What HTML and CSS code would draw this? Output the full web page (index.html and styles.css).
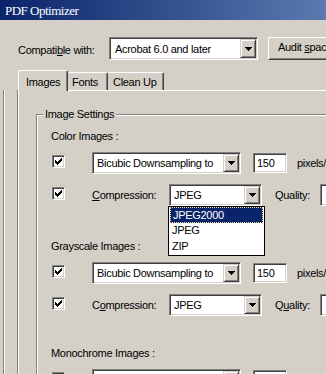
FILE: index.html
```html
<!DOCTYPE html>
<html lang="en">
<head>
    <meta charset="UTF-8">
    <meta name="viewport" content="width=device-width, initial-scale=1.0">
    <title>PDF Optimizer</title>
    <link rel="stylesheet" href="styles.css">
</head>
<body>
    <div class="titlebar">PDF Optimizer</div>

    <div class="compat">
        <span class="lbl">Compati<u>b</u>le with:</span>
        <div class="combo combo-version">
            <span class="combo-text">Acrobat 6.0 and later</span>
            <span class="combo-btn"><svg width="7" height="4" viewBox="0 0 7 4"><rect x="0" y="0" width="7" height="1"/><rect x="1" y="1" width="5" height="1"/><rect x="2" y="2" width="3" height="1"/><rect x="3" y="3" width="1" height="1"/></svg></span>
        </div>
        <div class="btn">Audit <u>s</u>pace usage...</div>
    </div>

    <div class="tabs">
        <div class="tab tab-active">Images</div>
        <div class="tab tab-fonts">Fonts</div>
        <div class="tab tab-clean">Clean Up</div>
    </div>

    <div class="sheet">
        <div class="panel">
            <div class="group">
                <div class="group-title">Image Settings</div>

                <!-- color -->
                <div class="section-label first">Color Images :</div>
                <div class="row">
                    <span class="check"><svg width="7" height="7" viewBox="0 0 7 7"><path d="M6 0h1v3H6v1H5v1H4v1H3v1H2V6H1V5H0V2h1v1h1v1h1V3h1V2h1V1h1z"/></svg></span>
                    <div class="combo combo-sampling">
                        <span class="combo-text">Bicubic Downsampling to</span>
                        <span class="combo-btn"><svg width="7" height="4" viewBox="0 0 7 4"><rect x="0" y="0" width="7" height="1"/><rect x="1" y="1" width="5" height="1"/><rect x="2" y="2" width="3" height="1"/><rect x="3" y="3" width="1" height="1"/></svg></span>
                    </div>
                    <span class="field">150</span>
                    <span class="unit">pixels/inch for images above</span>
                </div>
                <div class="row row-compress">
                    <span class="check"><svg width="7" height="7" viewBox="0 0 7 7"><path d="M6 0h1v3H6v1H5v1H4v1H3v1H2V6H1V5H0V2h1v1h1v1h1V3h1V2h1V1h1z"/></svg></span>
                    <span class="compress-lbl"><u>C</u>ompression:</span>
                    <div class="combo combo-compress">
                        <span class="combo-text">JPEG</span>
                        <span class="combo-btn"><svg width="7" height="4" viewBox="0 0 7 4"><rect x="0" y="0" width="7" height="1"/><rect x="1" y="1" width="5" height="1"/><rect x="2" y="2" width="3" height="1"/><rect x="3" y="3" width="1" height="1"/></svg></span>
                        <ul class="droplist">
                            <li class="picked">JPEG2000</li>
                            <li>JPEG</li>
                            <li>ZIP</li>
                        </ul>
                    </div>
                    <span class="quality-lbl">Quality:</span>
                    <div class="combo combo-quality"></div>
                </div>

                <!-- grayscale -->
                <div class="section-label">Grayscale Images :</div>
                <div class="row">
                    <span class="check"><svg width="7" height="7" viewBox="0 0 7 7"><path d="M6 0h1v3H6v1H5v1H4v1H3v1H2V6H1V5H0V2h1v1h1v1h1V3h1V2h1V1h1z"/></svg></span>
                    <div class="combo combo-sampling">
                        <span class="combo-text">Bicubic Downsampling to</span>
                        <span class="combo-btn"><svg width="7" height="4" viewBox="0 0 7 4"><rect x="0" y="0" width="7" height="1"/><rect x="1" y="1" width="5" height="1"/><rect x="2" y="2" width="3" height="1"/><rect x="3" y="3" width="1" height="1"/></svg></span>
                    </div>
                    <span class="field">150</span>
                    <span class="unit">pixels/inch for images above</span>
                </div>
                <div class="row row-compress">
                    <span class="check"><svg width="7" height="7" viewBox="0 0 7 7"><path d="M6 0h1v3H6v1H5v1H4v1H3v1H2V6H1V5H0V2h1v1h1v1h1V3h1V2h1V1h1z"/></svg></span>
                    <span class="compress-lbl">C<u>o</u>mpression:</span>
                    <div class="combo combo-compress">
                        <span class="combo-text">JPEG</span>
                        <span class="combo-btn"><svg width="7" height="4" viewBox="0 0 7 4"><rect x="0" y="0" width="7" height="1"/><rect x="1" y="1" width="5" height="1"/><rect x="2" y="2" width="3" height="1"/><rect x="3" y="3" width="1" height="1"/></svg></span>
                    </div>
                    <span class="quality-lbl">Q<u>u</u>ality:</span>
                    <div class="combo combo-quality"></div>
                </div>

                <!-- monochrome -->
                <div class="section-label mono">Monochrome Images :</div>
                <div class="row">
                    <span class="check"><svg width="7" height="7" viewBox="0 0 7 7"><path d="M6 0h1v3H6v1H5v1H4v1H3v1H2V6H1V5H0V2h1v1h1v1h1V3h1V2h1V1h1z"/></svg></span>
                    <div class="combo combo-sampling">
                        <span class="combo-text">Bicubic Downsampling to</span>
                        <span class="combo-btn"></span>
                    </div>
                    <span class="field">300</span>
                </div>
            </div>
        </div>
    </div>
</body>
</html>
```

FILE: styles.css
```css
* {
    box-sizing: border-box;
}
body {
    margin: 0;
    width: 326px;
    height: 374px;
    overflow: hidden;
    background-color: #d4d0c8;
    font-family: "Liberation Sans", Arial, sans-serif;
    font-size: 11px;
    line-height: 13px;
    letter-spacing: -0.3px;
    color: #000;
    white-space: nowrap;
}
u {
    text-decoration: underline;
    text-underline-offset: 1px;
}
.titlebar {
    height: 20px;
    padding: 1px 0 0 5px;
    background: linear-gradient(to right, #0a246a, #a6caf0) 0 0 / 630px 100% no-repeat;
    color: #fff;
    font-family: "Liberation Serif", "Times New Roman", serif;
    font-size: 13px;
    line-height: 19px;
    letter-spacing: -0.5px;
}

/* shared 3d borders */
.combo,
.field,
.check {
    border: 1px solid;
    border-color: #808080 #fff #fff #808080;
    box-shadow: inset 1px 1px 0 #404040, inset -1px -1px 0 #d4d0c8;
    background-color: #fff;
}
.compat > *,
.row > * {
    flex-shrink: 0;
}
.combo {
    position: relative;
    display: flex;
    height: 22px;
    padding: 1px;
}
.combo-text {
    flex: 1;
    padding-left: 3px;
    line-height: 18px;
    overflow: hidden;
}
.combo-btn {
    width: 16px;
    display: flex;
    align-items: center;
    justify-content: center;
    background-color: #d4d0c8;
    border: 1px solid;
    border-color: #d4d0c8 #404040 #404040 #d4d0c8;
    box-shadow: inset 1px 1px 0 #fff, inset -1px -1px 0 #808080;
}
.combo-btn svg {
    display: block;
    margin-left: 1px;
}

/* top row */
.compat {
    display: flex;
    align-items: center;
    height: 23px;
    margin-top: 17px;
    padding-left: 18px;
}
.compat .lbl {
    width: 91px;
    padding-top: 3px;
}
.combo-version {
    width: 149px;
    height: 23px;
}
.combo-version .combo-text {
    padding: 2px 0 0 4px;
    line-height: 17px;
}
.btn {
    margin-left: 10px;
    width: 130px;
    height: 23px;
    padding: 3px 0 0 9px;
    border: 1px solid;
    border-color: #fff #404040 #404040 #fff;
    box-shadow: inset 1px 1px 0 #d4d0c8, inset -1px -1px 0 #808080;
}

/* tabs */
.tabs {
    position: relative;
    z-index: 2;
    display: flex;
    align-items: flex-end;
    height: 21px;
    margin-top: 10px;
    padding-left: 18px;
}
.tab {
    height: 18px;
    margin-bottom: 1px;
    padding: 3px 0 0 4px;
    background-color: #d4d0c8;
    border-top: 1px solid #fff;
    border-left: 1px solid #fff;
    border-right: 1px solid #404040;
    border-radius: 2px 2px 0 0;
    box-shadow: inset -1px 0 0 #808080;
}
.tab-active {
    width: 50px;
    height: 21px;
    margin-bottom: 0;
    padding: 5px 0 0 7px;
}
.tab-fonts {
    width: 40px;
    border-left: none;
}
.tab-clean {
    width: 56px;
    border-left: none;
    padding-left: 5px;
}

/* tab sheet */
.sheet {
    margin: -1px 0 0 3px;
    padding-left: 14px;
    border-left: 1px solid #808080;
    box-shadow: inset 1px 0 0 #fff;
}
.panel {
    height: 300px;
    border-top: 1px solid #fff;
    border-left: 1px solid #fff;
    box-shadow: -1px 0 0 #808080;
    padding-top: 23px;
}
.group {
    margin-left: 17px;
    width: 400px;
    height: 300px;
    padding-left: 14px;
    border: 1px solid #808080;
    box-shadow: inset 1px 1px 0 #fff, 1px 1px 0 #fff;
}
.group-title {
    display: table;
    margin: -7px 0 0 -8px;
    padding: 0 2px;
    background-color: #d4d0c8;
}
.section-label {
    margin-top: 34px;
}
.section-label.first {
    margin-top: 9px;
}
.section-label.mono {
    margin-top: 31px;
}

/* option rows */
.row {
    display: flex;
    align-items: center;
    height: 22px;
    margin-top: 9px;
}
.row-compress {
    margin-top: 10px;
}
.check {
    width: 13px;
    height: 13px;
    margin-left: 1px;
    align-self: flex-start;
    margin-top: 3px;
    display: flex;
    align-items: center;
    justify-content: center;
}
.check svg {
    display: block;
}
.combo-sampling {
    margin-left: 27px;
    width: 149px;
}
.field {
    margin-left: 12px;
    width: 34px;
    height: 20px;
    padding: 0 0 0 3px;
    line-height: 18px;
}
.unit {
    margin-left: 10px;
}
.compress-lbl {
    margin-left: 27px;
    width: 77px;
}
.combo-compress {
    width: 93px;
}
.quality-lbl {
    margin-left: 13px;
}
.combo-quality {
    margin-left: 10px;
    width: 60px;
}

/* open dropdown list */
.droplist {
    position: absolute;
    top: calc(100% + 1px);
    left: -2px;
    width: 97px;
    margin: 0;
    padding: 0;
    list-style: none;
    background-color: #fff;
    border: 1px solid #000;
    z-index: 3;
}
.droplist li {
    height: 16px;
    padding-left: 3px;
    line-height: 15px;
}
.droplist li.picked {
    margin: 0 1px;
    padding-left: 2px;
    background-color: #0a246a;
    color: #fff;
    border: 1px dotted #f5db95;
}
```
